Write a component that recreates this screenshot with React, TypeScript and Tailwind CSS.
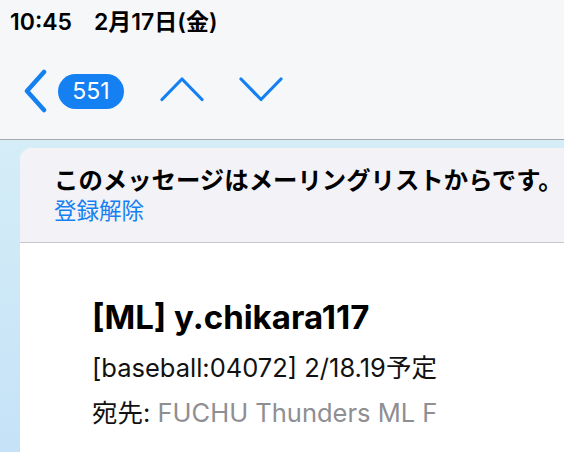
import React from "react";

export default function App() {
  const font = { fontFamily: 'Inter, "Noto Sans CJK JP", sans-serif' };
  return (
    <div className="w-[564px] h-[452px] overflow-hidden flex flex-col bg-white" style={font}>
      <div className="h-[140px] bg-[#f5f7f9] border-b border-[#a3abb0] flex flex-col shrink-0">
        <div className="pt-[8px] pl-[10px] flex items-center gap-[22px] text-[23px] font-semibold text-black leading-[28px]">
          <span>10:45</span>
          <span>2月17日(金)</span>
        </div>
        <div className="mt-[33px] flex items-center">
          <svg width="26" height="44" viewBox="0 0 26 44" className="ml-[22px]">
            <path d="M22 3 L5 22 L22 41" fill="none" stroke="#1580f2" strokeWidth="4.5" strokeLinecap="round" strokeLinejoin="round" />
          </svg>
          <div className="ml-[10px] w-[66px] h-[35px] rounded-full bg-[#1580f2] flex items-center justify-center text-white text-[23px] leading-none">
            551
          </div>
          <svg width="44" height="28" viewBox="0 0 44 28" className="ml-[36px]">
            <path d="M2 22.5 L22 2 L42 22.5" fill="none" stroke="#1580f2" strokeWidth="3.2" strokeLinecap="round" strokeLinejoin="round" />
          </svg>
          <svg width="44" height="28" viewBox="0 0 44 28" className="ml-[35px]">
            <path d="M2 2 L22 22.5 L42 2" fill="none" stroke="#1580f2" strokeWidth="3.2" strokeLinecap="round" strokeLinejoin="round" />
          </svg>
        </div>
      </div>
      <div className="flex-1 bg-gradient-to-b from-[#d4edf7] to-[#c6e2f7] pl-[20px] pt-[8px] flex flex-col">
        <div className="flex-1 rounded-tl-[12px] overflow-hidden bg-white flex flex-col">
          <div className="h-[95px] bg-[#f2f2f7] border-b border-[#c8c8cc] pl-[34px] pt-[17px] shrink-0">
            <div className="text-[24.4px] font-bold text-black leading-[30px] whitespace-nowrap">
              このメッセージはメーリングリストからです。
            </div>
            <div className="mt-[2px] text-[22.5px] text-[#1580f2] leading-[28px]">登録解除</div>
          </div>
          <div className="pl-[72px] pt-[56px]">
            <div className="text-[33px] font-bold text-black leading-[36px] whitespace-nowrap">[ML] y.chikara117</div>
            <div className="mt-[18px] text-[25.5px] text-[#111] leading-[30px] whitespace-nowrap">[baseball:04072] 2/18.19予定</div>
            <div className="mt-[15px] text-[25.5px] leading-[30px] whitespace-nowrap">
              <span className="text-[#111]">宛先: </span>
              <span className="text-[#8e8e93]">FUCHU Thunders ML F</span>
            </div>
          </div>
        </div>
      </div>
    </div>
  );
}
